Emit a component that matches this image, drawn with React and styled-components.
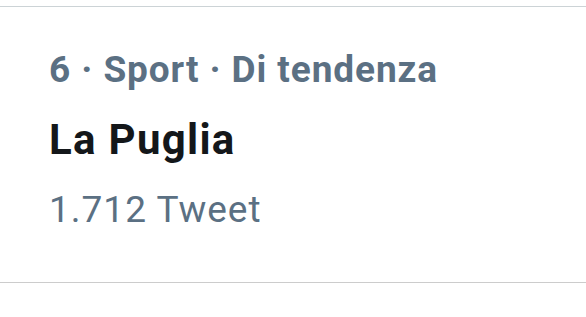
import React from "react";
import styled, { createGlobalStyle } from "styled-components";

const Global = createGlobalStyle`
  html, body { margin: 0; padding: 0; background: #ffffff; }
  body { font-family: Roboto, "Noto Sans", Arial, sans-serif; }
`;

const Page = styled.div`
  padding-top: 6px;
`;

const TrendItem = styled.div`
  border-top: 1px solid #ccd3d6;
  border-bottom: 1px solid #cccccc;
  padding: 39px 20px 48px 49px;
`;

const Meta = styled.div`
  font-size: 37px;
  line-height: 48px;
  letter-spacing: 0.9px;
  font-weight: 700;
  color: #5b7083;
  white-space: nowrap;
`;

const Name = styled.div`
  margin-top: 22px;
  font-size: 42px;
  line-height: 48px;
  letter-spacing: 1.3px;
  font-weight: 700;
  color: #14171a;
  white-space: nowrap;
`;

const Count = styled.div`
  margin-top: 22px;
  font-size: 37px;
  line-height: 48px;
  letter-spacing: 1px;
  font-weight: 400;
  color: #5b7083;
  white-space: nowrap;
`;

export default function App() {
  return (
    <>
      <Global />
      <Page>
        <TrendItem>
          <Meta>6 · Sport · Di tendenza</Meta>
          <Name>La Puglia</Name>
          <Count>1.712 Tweet</Count>
        </TrendItem>
      </Page>
    </>
  );
}
